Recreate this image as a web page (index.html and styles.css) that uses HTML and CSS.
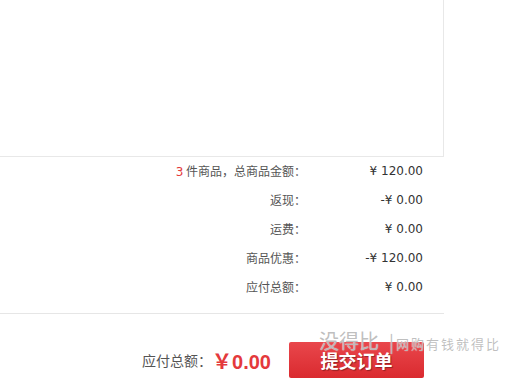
FILE: index.html
```
<!DOCTYPE html>
<html lang="zh-CN">
<head>
<meta charset="utf-8">
<title>订单结算</title>
<link rel="stylesheet" href="styles.css">
</head>
<body>
<div class="page">
  <div class="goods-box"></div>
  <div class="summary">
    <div class="row"><span class="label"><em class="count">3</em> 件商品，总商品金额：</span><span class="value">¥ 120.00</span></div>
    <div class="row"><span class="label">返现：</span><span class="value">-¥ 0.00</span></div>
    <div class="row"><span class="label">运费：</span><span class="value">¥ 0.00</span></div>
    <div class="row"><span class="label">商品优惠：</span><span class="value">-¥ 120.00</span></div>
    <div class="row"><span class="label">应付总额：</span><span class="value">¥ 0.00</span></div>
  </div>
  <div class="checkout">
    <span class="total-label">应付总额：</span>
    <span class="total-price">￥0.00</span>
    <button class="submit" type="button">提交订单</button>
  </div>
  <div class="watermark"><span class="wm-big">没得比</span><span class="wm-bar">|</span><span class="wm-small">网购有钱就得比</span></div>
</div>
</body>
</html>
```
FILE: styles.css
```
html, body {
  margin: 0;
  padding: 0;
  background: #fff;
}
body {
  font-family: "Noto Sans CJK SC", "DejaVu Sans", sans-serif;
  font-size: 12px;
  color: #555;
}
.page {
  position: relative;
  width: 444px;
  height: 385px;
}
.goods-box {
  height: 156px;
  border-right: 1px solid #e8e8e8;
  border-bottom: 1px solid #e8e8e8;
}
.summary {
  padding-bottom: 11px;
  border-bottom: 1px solid #e6e6e6;
}
.row {
  display: grid;
  grid-template-columns: 1fr 117px;
  height: 29px;
  line-height: 28px;
  padding-right: 21px;
}
.label {
  text-align: right;
  color: #555;
}
.count {
  font-style: normal;
  color: #e4393c;
  font-family: "DejaVu Sans", sans-serif;
}
.value {
  text-align: right;
  color: #333;
  font-family: "DejaVu Sans", "Noto Sans CJK SC", sans-serif;
}
.checkout {
  display: flex;
  align-items: center;
  justify-content: flex-end;
  padding-top: 28px;
  padding-right: 20px;
}
.total-label {
  font-size: 14px;
  color: #555;
}
.total-price {
  font-family: "Liberation Sans", "Noto Sans CJK SC", sans-serif;
  font-weight: bold;
  font-size: 20px;
  color: #e4393c;
  margin-right: 18px;
}
.submit {
  width: 135px;
  height: 36px;
  border: none;
  border-radius: 2px;
  background: linear-gradient(#e9474c, #da2a2f);
  color: #fff;
  font-family: "Noto Sans CJK SC", sans-serif;
  font-weight: bold;
  font-size: 18px;
  text-shadow: 1px 1px 1px rgba(0,0,0,0.35);
  padding: 0;
}
.watermark {
  position: absolute;
  left: 319px;
  top: 326px;
  display: flex;
  align-items: baseline;
  white-space: nowrap;
  color: rgba(170,170,170,0.75);
  font-family: "Noto Sans CJK SC", sans-serif;
  text-shadow: 0 0 1px #fff;
  pointer-events: none;
}
.wm-big {
  font-size: 20px;
}
.wm-bar {
  font-size: 18px;
  margin: 0 2px 0 10px;
}
.wm-small {
  font-size: 13px;
  letter-spacing: 2px;
}
```
